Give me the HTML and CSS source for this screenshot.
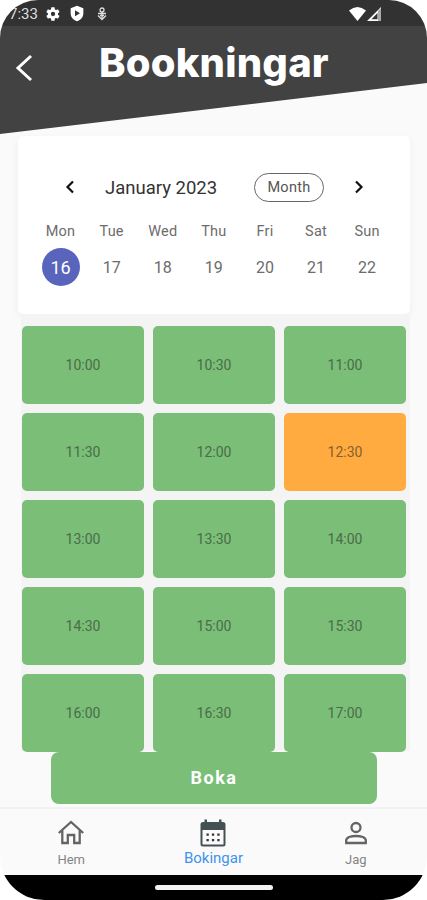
FILE: index.html
```html
<!DOCTYPE html>
<html lang="sv">
<head>
<meta charset="utf-8">
<title>Bookningar</title>
<link rel="stylesheet" href="styles.css">
</head>
<body>
<div class="phone">
  <header class="top">
    <div class="status">
      <span class="clock">7:33</span>
      <svg class="gear" width="16" height="16" viewBox="0 0 24 24"><path fill="#fff" d="M19.4 13c.1-.6.1-1.400 0-2l2.100-1.600c.2-.2.2-.4.100-.6l-2-3.500c-.1-.2-.4-.3-.6-.2l-2.500 1c-.5-.4-1.100-.7-1.700-1L14.400 2.400c0-.2-.2-.4-.5-.4h-4c-.2 0-.4.2-.5.400L9 5.100c-.6.300-1.200.6-1.700 1l-2.500-1c-.2-.1-.5 0-.6.200l-2 3.500c-.1.200-.1.500.1.600L4.400 11c-.1.600-.1 1.400 0 2l-2.100 1.600c-.2.2-.2.400-.1.600l2 3.500c.1.200.4.300.6.200l2.500-1c.5.400 1.100.7 1.700 1l.4 2.700c.1.200.3.400.5.400h4c.3 0 .5-.2.500-.4l.4-2.700c.6-.3 1.200-.6 1.700-1l2.500 1c.2.100.5 0 .6-.2l2-3.500c.1-.2.1-.5-.1-.6zM12 15.200a3.200 3.200 0 1 1 0-6.400 3.200 3.200 0 0 1 0 6.400z"/></svg>
      <svg class="shield" width="16" height="17" viewBox="0 0 24 25"><path fill="#fff" d="M12 1 2.500 4.500v8C2.500 18 6.500 22.500 12 24c5.500-1.500 9.500-6 9.500-11.500v-8z"/><path fill="#333" d="M9 7.500v9l7.500-4.500z"/></svg>
      <svg class="usb" width="12" height="14" viewBox="0 0 12 14" fill="none" stroke="#ddd" stroke-width="1.300"><circle cx="6" cy="3" r="2"/><path d="M6 5v7M2 6.500h8M2 8.500 6 12.500l4-4M4 8.500h4"/></svg>
      <svg class="signals" width="34" height="16" viewBox="0 0 34 16"><path fill="#fff" d="M0 4.500Q8.500-2.500 17 4.500L8.500 15z"/><path fill="#fff" d="M32 1v14H18zM28.500 7l-6 6.200h6z" fill-rule="evenodd"/><path fill="#aaa" d="M29 5l3-3v13h-3z"/></svg>
    </div>
    <div class="titlebar">
      <svg class="back" width="18" height="28" viewBox="0 0 18 28" fill="none" stroke="#fff" stroke-width="3"><path d="M16 2 3 14l13 12"/></svg>
      <h1>Bookningar</h1>
    </div>
  </header>
  <main>
    <section class="calendar">
      <div class="monthrow">
        <svg class="prev" width="10" height="14" viewBox="0 0 10 14" fill="none" stroke="#111" stroke-width="2.200"><path d="M8 1.500 2.500 7 8 12.500"/></svg>
        <span class="month">January 2023</span>
        <span class="pill">Month</span>
        <svg class="next" width="10" height="14" viewBox="0 0 10 14" fill="none" stroke="#111" stroke-width="2.200"><path d="M2 1.500 7.500 7 2 12.500"/></svg>
      </div>
      <div class="week names"><span>Mon</span><span>Tue</span><span>Wed</span><span>Thu</span><span>Fri</span><span>Sat</span><span>Sun</span></div>
      <div class="week days"><span class="selected">16</span><span>17</span><span>18</span><span>19</span><span>20</span><span>21</span><span>22</span></div>
    </section>
    <section class="slots">
      <div>10:00</div><div>10:30</div><div>11:00</div>
      <div>11:30</div><div>12:00</div><div class="picked">12:30</div>
      <div>13:00</div><div>13:30</div><div>14:00</div>
      <div>14:30</div><div>15:00</div><div>15:30</div>
      <div>16:00</div><div>16:30</div><div>17:00</div>
    </section>
    <div class="book">Boka</div>
  </main>
  <nav>
    <div class="tab"><svg width="28" height="28" viewBox="0 0 28 28" fill="none" stroke="#646464" stroke-width="2.300"><path d="M1.800 14 14 3l12.200 11M5.300 11.500V24h5.500v-8h6.400v8h5.500V11.500"/></svg><span>Hem</span></div>
    <div class="tab active"><svg width="28" height="28" viewBox="0 0 28 28"><path fill="#455054" fill-rule="evenodd" d="M4 3h1.500V.5h2.500V3h12V.5h2.500V3H24q2.500 0 2.500 2.500V25Q26.500 27.500 24 27.500H4q-2.500 0-2.500-2.500V5.500Q1.500 3 4 3zm-.5 8v14.500h21V11z"/><path fill="#333" d="M7.500 14.500h2.300v2.300H7.500zm5.400 0h2.300v2.300h-2.300zm5.400 0h2.300v2.300h-2.300zM7.500 20h2.300v2.300H7.500zm5.400 0h2.300v2.300h-2.300zm5.400 0h2.300v2.300h-2.300z"/></svg><span>Bokingar</span></div>
    <div class="tab"><svg width="28" height="28" viewBox="0 0 28 28" fill="none" stroke="#646464" stroke-width="2.300"><circle cx="14" cy="8.500" r="4.500"/><path d="M4.200 24v-2.500C4.200 18.500 9 17 14 17s9.800 1.500 9.800 4.500V24z"/></svg><span>Jag</span></div>
  </nav>
  <footer><span class="handle"></span></footer>
</div>
</body>
</html>
```
FILE: styles.css
```css
* { box-sizing: border-box; }
body { margin: 0; background: #fff; font-family: Roboto, sans-serif; }
.phone { width: 427px; height: 900px; display: flex; flex-direction: column; overflow: hidden; background: #fafafa; border-radius: 38px 38px 44px 44px; }
.top { height: 135px; flex: none; background: linear-gradient(#323232 26px, #424242 26px); clip-path: polygon(0 0, 100% 0, 100% 83px, 0 134px); }
.status { height: 26px; display: flex; align-items: center; padding: 1px 44px 0 9px; color: #fff; }
.clock { width: 36px; font-size: 15px; color: #ddd; }
.shield { margin-left: 8px; }
.usb { margin-left: 11px; }
.signals { margin-left: auto; }
.titlebar { display: flex; align-items: flex-start; padding: 28px 0 0 15px; }
h1 { margin: -14px 0 0 66px; font: 800 40px/46px Inter, sans-serif; letter-spacing: .2px; color: #fff; white-space: nowrap; }
main { height: 672px; flex: none; padding: 1px 17px 0 18px; display: flex; flex-direction: column; }
.calendar { height: 178px; flex: none; background: #fff; border-radius: 5px; box-shadow: 0 3px 8px #0000000d; padding: 37px 17px 0; }
.monthrow { height: 28px; display: flex; align-items: center; padding: 0 29px 0 30px; }
.month { width: 120px; margin-left: 30px; padding-top: 1px; font-size: 18.500px; color: #333; white-space: nowrap; }
.pill { width: 70px; height: 29px; margin-left: 29px; border: 1px solid #666; border-radius: 15px; text-align: center; font-size: 14.500px; line-height: 28px; color: #555; letter-spacing: .3px; }
.next { margin-left: auto; }
.week { display: grid; grid-template-columns: repeat(7, 51.100px); text-align: center; color: #6c6c6c; }
.names { margin-top: 21px; font-size: 14.500px; line-height: 20px; letter-spacing: .2px; }
.days { margin-top: 6px; height: 38px; line-height: 39px; font-size: 16px; }
.selected { width: 38px; height: 38px; margin: 0 auto; border-radius: 50%; background: #5965bd; color: #fff; font-size: 18px; }
.slots { height: 438px; flex: none; margin: 0 0 0 3px; padding: 12px 0 0 1px; overflow: hidden; display: grid; grid-template-columns: repeat(3, 122px); grid-auto-rows: 78px; gap: 9px; background: linear-gradient(#f4f4f4 437px, #fafafa 437px); }
.slots div { background: #7abe78; border-radius: 5px; display: flex; align-items: center; justify-content: center; font-size: 14px; color: #4a6d48; }
.slots .picked { background: #ffab40; color: #86602f; }
.book { height: 52px; width: 326px; margin: 0 auto; flex: none; border-radius: 8px; background: #7abe78; color: #fff; font-size: 18px; font-weight: 700; letter-spacing: 1.500px; line-height: 52px; text-align: center; }
nav { height: 68px; flex: none; border-top: 2px solid #f2f2f2; display: grid; grid-template-columns: repeat(3, 1fr); }
.tab { display: flex; flex-direction: column; align-items: center; padding-top: 10px; color: #858585; font-size: 13px; line-height: 25px; }
.active { color: #3f93ea; font-size: 15px; line-height: 23px; }
footer { height: 25px; flex: none; background: #000; padding-top: 10px; }
.handle { display: block; width: 118px; height: 5px; margin: 0 auto; border-radius: 3px; background: #f2f2f2; }
```
